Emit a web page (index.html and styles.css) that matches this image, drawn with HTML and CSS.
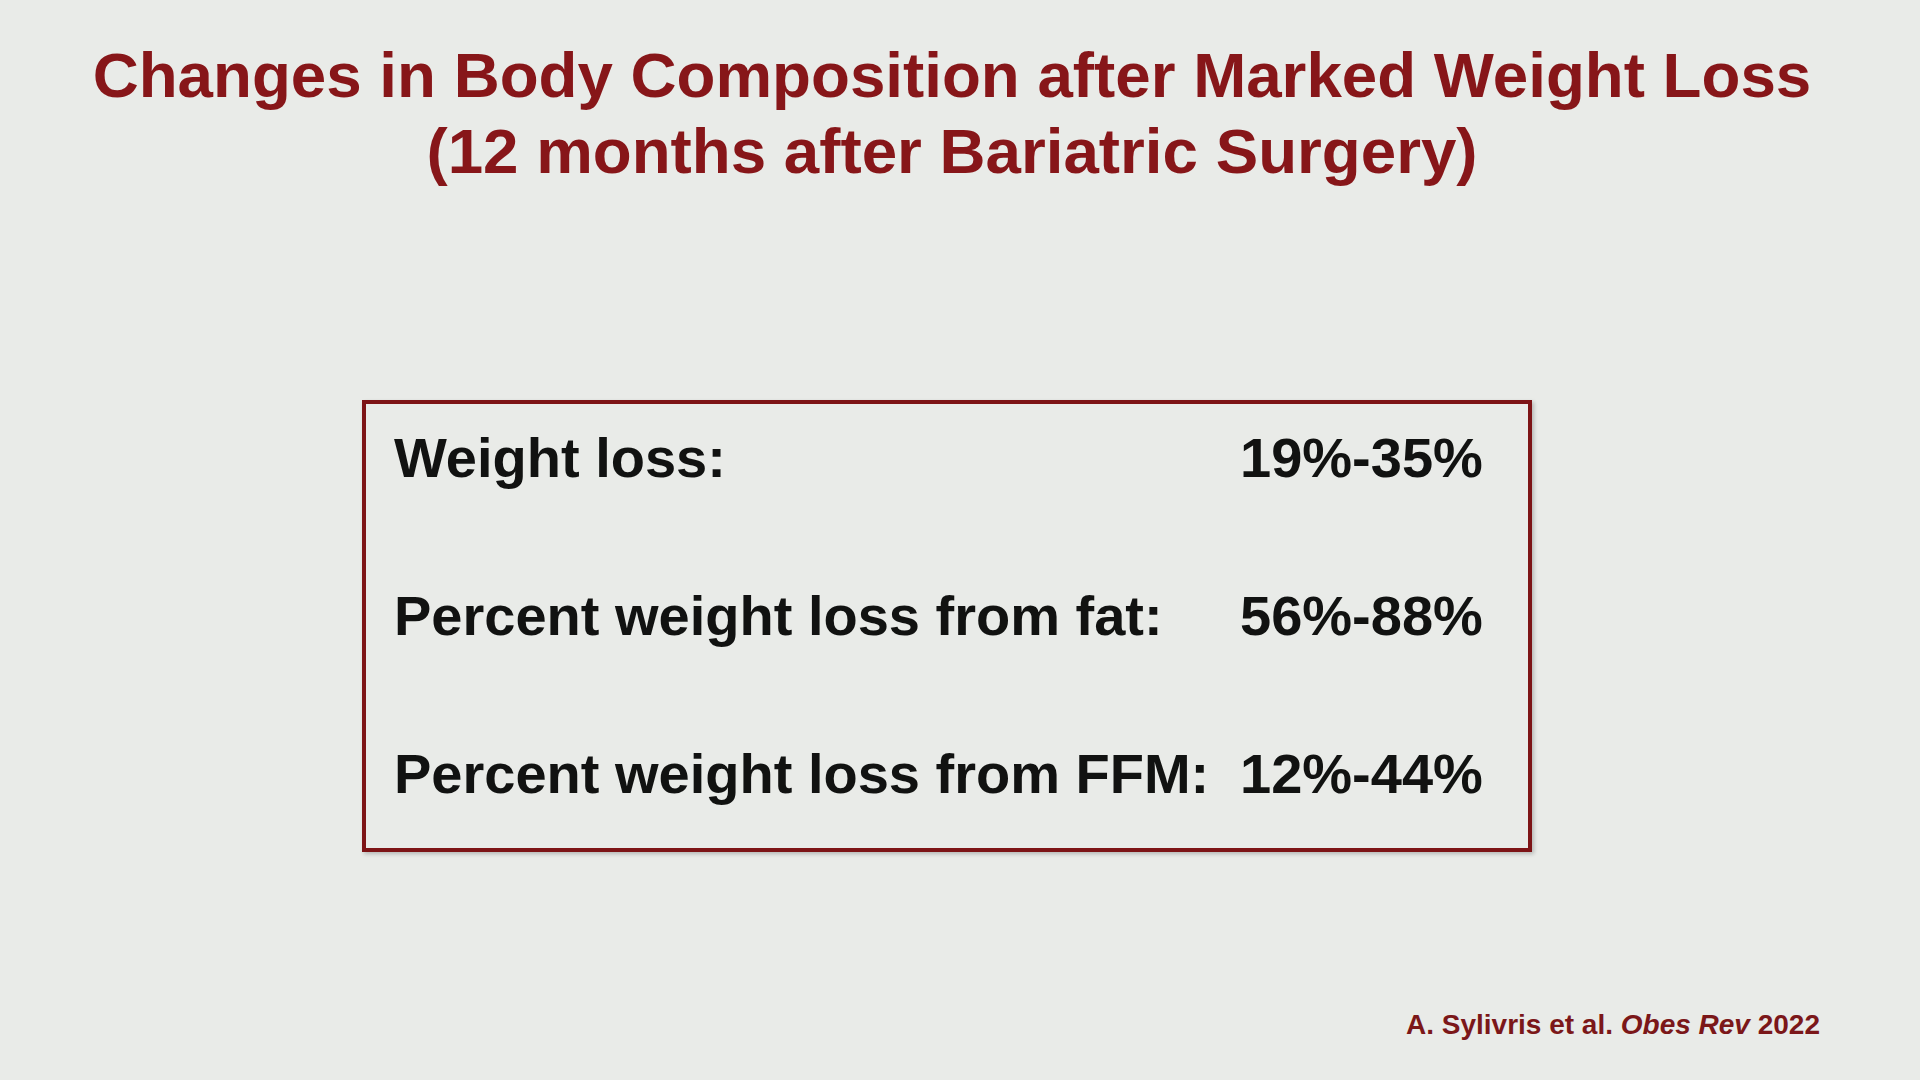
FILE: index.html
```html
<!DOCTYPE html>
<html lang="en">
<head>
<meta charset="utf-8">
<title>Changes in Body Composition after Marked Weight Loss</title>
<link rel="stylesheet" href="styles.css">
</head>
<body>
<main class="slide">
  <h1 class="title">Changes in Body Composition after Marked Weight Loss<br>(12 months after Bariatric Surgery)</h1>
  <section class="panel">
    <div class="row"><span class="label">Weight loss:</span><span class="value">19%-35%</span></div>
    <div class="row"><span class="label">Percent weight loss from fat:</span><span class="value">56%-88%</span></div>
    <div class="row"><span class="label">Percent weight loss from FFM:</span><span class="value">12%-44%</span></div>
  </section>
  <p class="cite">A. Sylivris et al. <em>Obes Rev</em> 2022</p>
</main>
</body>
</html>
```
FILE: styles.css
```css
html, body {
  margin: 0;
  padding: 0;
  background: #e9ebe8;
}

.slide {
  width: 1920px;
  height: 1080px;
  display: flex;
  flex-direction: column;
  box-sizing: border-box;
  font-family: "Liberation Sans", Arial, sans-serif;
  font-weight: bold;
}

.title {
  margin: 0;
  padding: 37px 16px 0 0;
  text-align: center;
  font-size: 63.7px;
  line-height: 76px;
  font-weight: bold;
  color: #871619;
}

.panel {
  margin: 211px 0 0 362px;
  width: 1170px;
  height: 452px;
  box-sizing: border-box;
  border: 4px solid #7d1416;
  box-shadow: 2px 2px 4px rgba(0, 0, 0, 0.22);
  padding: 22px 0 0 28px;
  display: flex;
  flex-direction: column;
  gap: 94px;
}

.row {
  display: grid;
  grid-template-columns: 846px auto;
  font-size: 56px;
  line-height: 64px;
  color: #111211;
}

.cite {
  margin: auto 0 0 0;
  padding: 0 100px 39px 0;
  text-align: right;
  font-size: 28px;
  line-height: 32px;
  color: #7b1719;
}

.cite em {
  font-style: italic;
}
```
